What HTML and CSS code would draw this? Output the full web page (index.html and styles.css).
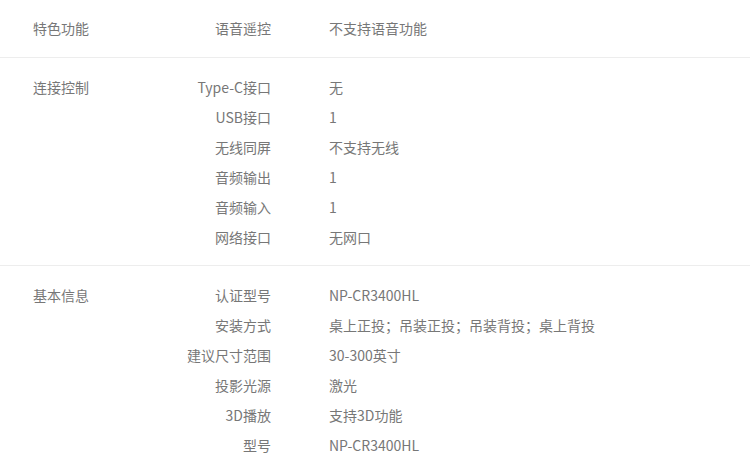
FILE: index.html
```html
<!DOCTYPE html>
<html lang="zh-CN">
<head>
<meta charset="utf-8">
<title>参数</title>
<link rel="stylesheet" href="styles.css">
</head>
<body>
<div class="params">
  <section class="group">
    <div class="group-title">特色功能</div>
    <dl class="specs">
      <div class="spec"><dt>语音遥控</dt><dd>不支持语音功能</dd></div>
    </dl>
  </section>
  <section class="group">
    <div class="group-title">连接控制</div>
    <dl class="specs">
      <div class="spec"><dt>Type-C接口</dt><dd>无</dd></div>
      <div class="spec"><dt>USB接口</dt><dd>1</dd></div>
      <div class="spec"><dt>无线同屏</dt><dd>不支持无线</dd></div>
      <div class="spec"><dt>音频输出</dt><dd>1</dd></div>
      <div class="spec"><dt>音频输入</dt><dd>1</dd></div>
      <div class="spec"><dt>网络接口</dt><dd>无网口</dd></div>
    </dl>
  </section>
  <section class="group">
    <div class="group-title">基本信息</div>
    <dl class="specs">
      <div class="spec"><dt>认证型号</dt><dd>NP-CR3400HL</dd></div>
      <div class="spec"><dt>安装方式</dt><dd>桌上正投；吊装正投；吊装背投；桌上背投</dd></div>
      <div class="spec"><dt>建议尺寸范围</dt><dd>30-300英寸</dd></div>
      <div class="spec"><dt>投影光源</dt><dd>激光</dd></div>
      <div class="spec"><dt>3D播放</dt><dd>支持3D功能</dd></div>
      <div class="spec"><dt>型号</dt><dd>NP-CR3400HL</dd></div>
    </dl>
  </section>
</div>
</body>
</html>
```
FILE: styles.css
```css
html, body {
  margin: 0;
  padding: 0;
  background: #ffffff;
}
body {
  font-family: "Noto Sans CJK SC", "Noto Sans", sans-serif;
  font-size: 14px;
  color: #777777;
}
.params {
  width: 750px;
}
.group {
  display: flex;
  padding: 14px 0 13px 33px;
  border-bottom: 1px solid #ededed;
}
.group:first-child {
  padding-top: 13px;
  padding-bottom: 14px;
}
.group:last-child {
  border-bottom: none;
}
.group-title {
  width: 100px;
  height: 30px;
  line-height: 30px;
  flex: none;
}
.specs {
  margin: 0;
  display: flex;
  flex-direction: column;
}
.spec {
  display: flex;
  height: 30px;
  line-height: 30px;
}
.spec dt {
  width: 138px;
  text-align: right;
  flex: none;
}
.spec dd {
  margin: 0 0 0 58px;
  white-space: nowrap;
}
```
